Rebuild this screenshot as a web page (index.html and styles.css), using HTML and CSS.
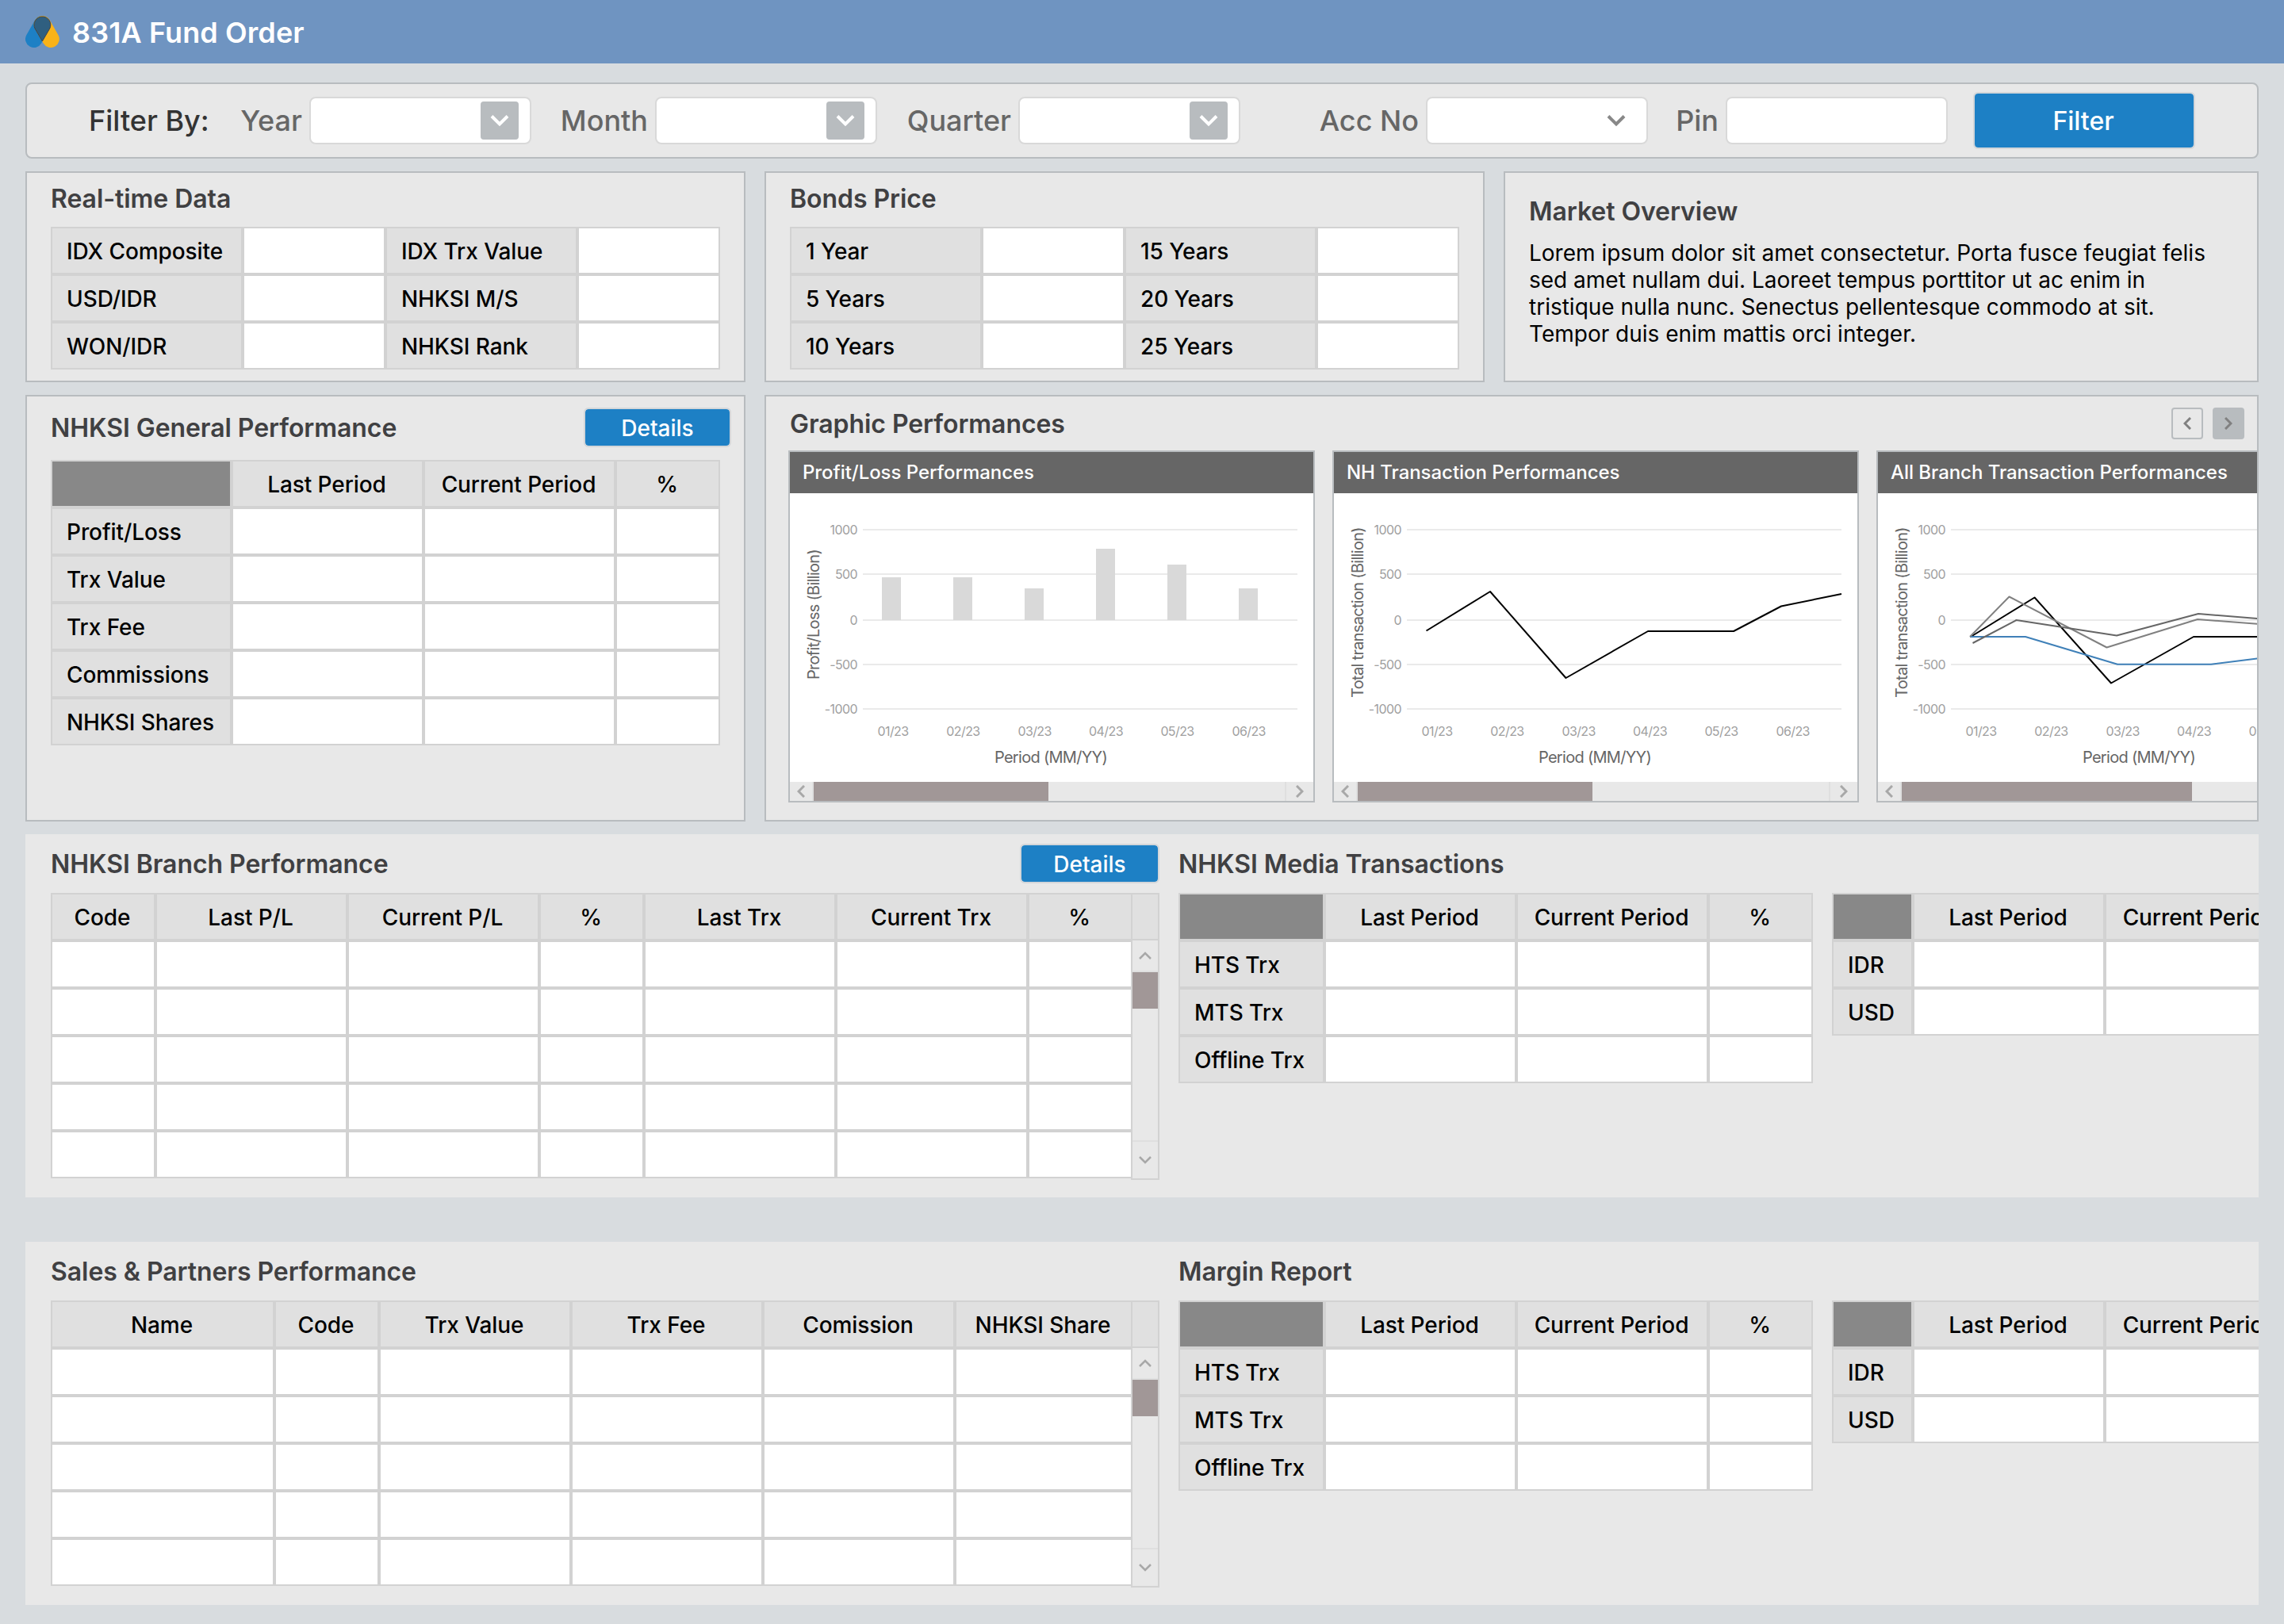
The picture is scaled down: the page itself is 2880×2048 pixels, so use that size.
FILE: index.html
```html
<!DOCTYPE html>
<html lang="en">
<head>
  <meta charset="UTF-8" />
  <meta name="viewport" content="width=device-width, initial-scale=1.0"/>
  <title>831A Fund Order</title>
  <link rel="stylesheet" href="styles.css">
</head>
<body>
  <header class="topbar">
    <svg class="logo" viewBox="0 0 43 40">
      <path d="M10.7 29.3L21.4 10.7" stroke="#1d80c5" stroke-width="21.4" stroke-linecap="round"/>
      <path d="M32.1 29.3L21.4 10.7" stroke="#fab319" stroke-width="21.4" stroke-linecap="round"/>
      <path d="M21.4 32L12.1 16A10.4 10.4 0 1 1 30.7 16Z" fill="#2f5f80" stroke="#404448" stroke-width="1"/>
    </svg>
    <h1>831A Fund Order</h1>
  </header>

  <main>
    <form class="filter-bar">
      <span class="filter-title">Filter By:</span>
      <label>Year <span class="field"><span class="drop"><svg class="chev" viewBox="0 0 24 16"><path d="M2 2.5L12 12.5L22 2.5"/></svg></span></span></label>
      <label>Month <span class="field"><span class="drop"><svg class="chev" viewBox="0 0 24 16"><path d="M2 2.5L12 12.5L22 2.5"/></svg></span></span></label>
      <label>Quarter <span class="field"><span class="drop"><svg class="chev" viewBox="0 0 24 16"><path d="M2 2.5L12 12.5L22 2.5"/></svg></span></span></label>
      <label>Acc No <span class="field"><span class="drop plain"><svg class="chev" viewBox="0 0 24 16"><path d="M2 2.5L12 12.5L22 2.5"/></svg></span></span></label>
      <label>Pin <span class="field"></span></label>
      <button type="button" class="btn filter-btn">Filter</button>
    </form>

    <div class="row top-row">
      <section class="panel">
        <h2>Real-time Data</h2>
        <table>
          <colgroup><col class="w242"><col class="w180"><col class="w242"><col class="w180"></colgroup>
          <tr><th>IDX Composite</th><td></td><th>IDX Trx Value</th><td></td></tr>
          <tr><th>USD/IDR</th><td></td><th>NHKSI M/S</th><td></td></tr>
          <tr><th>WON/IDR</th><td></td><th>NHKSI Rank</th><td></td></tr>
        </table>
      </section>
      <section class="panel">
        <h2>Bonds Price</h2>
        <table>
          <colgroup><col class="w242"><col class="w180"><col class="w242"><col class="w180"></colgroup>
          <tr><th>1 Year</th><td></td><th>15 Years</th><td></td></tr>
          <tr><th>5 Years</th><td></td><th>20 Years</th><td></td></tr>
          <tr><th>10 Years</th><td></td><th>25 Years</th><td></td></tr>
        </table>
      </section>
      <section class="panel market">
        <h2>Market Overview</h2>
        <p>Lorem ipsum dolor sit amet consectetur. Porta fusce feugiat felis sed amet nullam dui. Laoreet tempus porttitor ut ac enim in tristique nulla nunc. Senectus pellentesque commodo at sit. Tempor duis enim mattis orci integer.</p>
      </section>
    </div>

    <div class="row mid-row">
      <section class="panel general">
        <div class="panel-head">
          <h2>NHKSI General Performance</h2>
          <button type="button" class="btn">Details</button>
        </div>
        <table>
          <colgroup><col class="w228"><col class="w242"><col class="w242"><col class="w132"></colgroup>
          <thead><tr><th class="corner"></th><th>Last Period</th><th>Current Period</th><th>%</th></tr></thead>
          <tbody>
            <tr><th>Profit/Loss</th><td></td><td></td><td></td></tr>
            <tr><th>Trx Value</th><td></td><td></td><td></td></tr>
            <tr><th>Trx Fee</th><td></td><td></td><td></td></tr>
            <tr><th>Commissions</th><td></td><td></td><td></td></tr>
            <tr><th>NHKSI Shares</th><td></td><td></td><td></td></tr>
          </tbody>
        </table>
      </section>

      <section class="panel graphics">
        <div class="panel-head">
          <h2>Graphic Performances</h2>
          <div class="pager">
            <span class="page-btn"><svg viewBox="0 0 10 16"><path d="M9 1L2 8L9 15"/></svg></span>
            <span class="page-btn active"><svg viewBox="0 0 10 16"><path d="M1 1L8 8L1 15"/></svg></span>
          </div>
        </div>
        <div class="cards">
          <article class="card">
            <h3>Profit/Loss Performances</h3>
            <svg class="chart" viewBox="0 0 660 364">
              <path class="grid" d="M92 46H640M92 102H640M92 160H640M92 216H640M92 272H640"/>
              <g class="ticks end">
                <text x="85" y="52">1000</text><text x="85" y="108">500</text><text x="85" y="166">0</text><text x="85" y="222">-500</text><text x="85" y="278">-1000</text>
              </g>
              <g class="ticks">
                <text x="130" y="306">01/23</text><text x="218.5" y="306">02/23</text><text x="308.6" y="306">03/23</text><text x="398.5" y="306">04/23</text><text x="488.5" y="306">05/23</text><text x="578.7" y="306">06/23</text>
              </g>
              <g fill="#d9d9d9">
                <rect x="116" y="106" width="24" height="54"/>
                <rect x="206" y="106" width="24" height="54"/>
                <rect x="296" y="120" width="24" height="40"/>
                <rect x="386" y="70" width="24" height="90"/>
                <rect x="476" y="90" width="24" height="70"/>
                <rect x="566" y="120" width="24" height="40"/>
              </g>
              <text class="axis" transform="translate(36.5 153) rotate(-90)">Profit/Loss (Billion)</text>
              <text class="axis" x="329" y="340">Period (MM/YY)</text>
            </svg>
            <div class="hscroll">
              <span class="arrow"><svg viewBox="0 0 10 16"><path d="M9 1L2 8L9 15"/></svg></span>
              <span class="thumb"></span>
              <span class="arrow last"><svg viewBox="0 0 10 16"><path d="M1 1L8 8L1 15"/></svg></span>
            </div>
          </article>

          <article class="card">
            <h3>NH Transaction Performances</h3>
            <svg class="chart" viewBox="0 0 660 364">
              <path class="grid" d="M92 46H640M92 102H640M92 160H640M92 216H640M92 272H640"/>
              <g class="ticks end">
                <text x="85" y="52">1000</text><text x="85" y="108">500</text><text x="85" y="166">0</text><text x="85" y="222">-500</text><text x="85" y="278">-1000</text>
              </g>
              <g class="ticks">
                <text x="130" y="306">01/23</text><text x="218.5" y="306">02/23</text><text x="308.6" y="306">03/23</text><text x="398.5" y="306">04/23</text><text x="488.5" y="306">05/23</text><text x="578.7" y="306">06/23</text>
              </g>
              <path class="line" stroke="#000" d="M116.5 173.5L197 124L292.5 233L396 174H504L564 142.5L640 127"/>
              <text class="axis" transform="translate(36.5 150.5) rotate(-90)">Total transaction (Billion)</text>
              <text class="axis" x="329" y="340">Period (MM/YY)</text>
            </svg>
            <div class="hscroll">
              <span class="arrow"><svg viewBox="0 0 10 16"><path d="M9 1L2 8L9 15"/></svg></span>
              <span class="thumb"></span>
              <span class="arrow last"><svg viewBox="0 0 10 16"><path d="M1 1L8 8L1 15"/></svg></span>
            </div>
          </article>

          <article class="card">
            <h3>All Branch Transaction Performances</h3>
            <svg class="chart" viewBox="0 0 660 364">
              <path class="grid" d="M92 46H640M92 102H640M92 160H640M92 216H640M92 272H640"/>
              <g class="ticks end">
                <text x="85" y="52">1000</text><text x="85" y="108">500</text><text x="85" y="166">0</text><text x="85" y="222">-500</text><text x="85" y="278">-1000</text>
              </g>
              <g class="ticks">
                <text x="130" y="306">01/23</text><text x="218.5" y="306">02/23</text><text x="308.6" y="306">03/23</text><text x="398.5" y="306">04/23</text><text x="488.5" y="306">05/23</text><text x="578.7" y="306">06/23</text>
              </g>
              <path class="line" stroke="#000" d="M117 181L197.5 131.5L294 239.5L398 181H504L564 150"/>
              <path class="line" stroke="#3f80b8" d="M116 181H186L302 215.8H420L478 208.4L560 198"/>
              <path class="line" stroke="#808080" d="M116 181L165.5 130.5L288.5 194.5L403 159L478 164.7L560 171"/>
              <path class="line" stroke="#666" d="M119.5 189L174.5 160L301 179.5L404 152L478 158L560 164"/>
              <text class="axis" transform="translate(36.5 150.5) rotate(-90)">Total transaction (Billion)</text>
              <text class="axis" x="329" y="340">Period (MM/YY)</text>
            </svg>
            <div class="hscroll">
              <span class="arrow"><svg viewBox="0 0 10 16"><path d="M9 1L2 8L9 15"/></svg></span>
              <span class="thumb wide"></span>
              <span class="arrow last"><svg viewBox="0 0 10 16"><path d="M1 1L8 8L1 15"/></svg></span>
            </div>
          </article>
        </div>
      </section>
    </div>

    <section class="sheet">
      <div class="block main-block">
        <div class="panel-head">
          <h2>NHKSI Branch Performance</h2>
          <button type="button" class="btn">Details</button>
        </div>
        <div class="scroll-table">
          <table>
            <colgroup><col class="w132"><col class="w242"><col class="w242"><col class="w132"><col class="w242"><col class="w242"><col class="w132"></colgroup>
            <thead><tr><th>Code</th><th>Last P/L</th><th>Current P/L</th><th>%</th><th>Last Trx</th><th>Current Trx</th><th>%</th></tr></thead>
            <tbody>
              <tr><td></td><td></td><td></td><td></td><td></td><td></td><td></td></tr>
              <tr><td></td><td></td><td></td><td></td><td></td><td></td><td></td></tr>
              <tr><td></td><td></td><td></td><td></td><td></td><td></td><td></td></tr>
              <tr><td></td><td></td><td></td><td></td><td></td><td></td><td></td></tr>
              <tr><td></td><td></td><td></td><td></td><td></td><td></td><td></td></tr>
            </tbody>
          </table>
          <div class="vscroll">
            <div class="vhead"></div>
            <span class="varrow"><svg viewBox="0 0 16 10"><path d="M1 9L8 2L15 9"/></svg></span>
            <span class="vthumb"></span>
            <span class="varrow down"><svg viewBox="0 0 16 10"><path d="M1 1L8 8L15 1"/></svg></span>
          </div>
        </div>
      </div>
      <div class="block">
        <div class="panel-head"><h2>NHKSI Media Transactions</h2></div>
        <div class="pair">
          <table>
            <colgroup><col class="w184"><col class="w242"><col class="w242"><col class="w132"></colgroup>
            <thead><tr><th class="corner"></th><th>Last Period</th><th>Current Period</th><th>%</th></tr></thead>
            <tbody>
              <tr><th>HTS Trx</th><td></td><td></td><td></td></tr>
              <tr><th>MTS Trx</th><td></td><td></td><td></td></tr>
              <tr><th>Offline Trx</th><td></td><td></td><td></td></tr>
            </tbody>
          </table>
          <table>
            <colgroup><col class="w102"><col class="w242"><col class="w242"></colgroup>
            <thead><tr><th class="corner"></th><th>Last Period</th><th>Current Period</th></tr></thead>
            <tbody>
              <tr><th>IDR</th><td></td><td></td></tr>
              <tr><th>USD</th><td></td><td></td></tr>
            </tbody>
          </table>
        </div>
      </div>
    </section>

    <section class="sheet">
      <div class="block main-block">
        <div class="panel-head">
          <h2>Sales &amp; Partners Performance</h2>
        </div>
        <div class="scroll-table">
          <table>
            <colgroup><col class="w282"><col class="w132"><col class="w242"><col class="w242"><col class="w242"><col class="w224"></colgroup>
            <thead><tr><th>Name</th><th>Code</th><th>Trx Value</th><th>Trx Fee</th><th>Comission</th><th>NHKSI Share</th></tr></thead>
            <tbody>
              <tr><td></td><td></td><td></td><td></td><td></td><td></td></tr>
              <tr><td></td><td></td><td></td><td></td><td></td><td></td></tr>
              <tr><td></td><td></td><td></td><td></td><td></td><td></td></tr>
              <tr><td></td><td></td><td></td><td></td><td></td><td></td></tr>
              <tr><td></td><td></td><td></td><td></td><td></td><td></td></tr>
            </tbody>
          </table>
          <div class="vscroll">
            <div class="vhead"></div>
            <span class="varrow"><svg viewBox="0 0 16 10"><path d="M1 9L8 2L15 9"/></svg></span>
            <span class="vthumb"></span>
            <span class="varrow down"><svg viewBox="0 0 16 10"><path d="M1 1L8 8L15 1"/></svg></span>
          </div>
        </div>
      </div>
      <div class="block">
        <div class="panel-head"><h2>Margin Report</h2></div>
        <div class="pair">
          <table>
            <colgroup><col class="w184"><col class="w242"><col class="w242"><col class="w132"></colgroup>
            <thead><tr><th class="corner"></th><th>Last Period</th><th>Current Period</th><th>%</th></tr></thead>
            <tbody>
              <tr><th>HTS Trx</th><td></td><td></td><td></td></tr>
              <tr><th>MTS Trx</th><td></td><td></td><td></td></tr>
              <tr><th>Offline Trx</th><td></td><td></td><td></td></tr>
            </tbody>
          </table>
          <table>
            <colgroup><col class="w102"><col class="w242"><col class="w242"></colgroup>
            <thead><tr><th class="corner"></th><th>Last Period</th><th>Current Period</th></tr></thead>
            <tbody>
              <tr><th>IDR</th><td></td><td></td></tr>
              <tr><th>USD</th><td></td><td></td></tr>
            </tbody>
          </table>
        </div>
      </div>
    </section>
  </main>
</body>
</html>
```
FILE: styles.css
```css
* {
  box-sizing: border-box;
}

body {
  margin: 0;
  font-family: Inter, "Liberation Sans", sans-serif;
  font-size: 28px;
  color: #000;
  background: #d8dcdf;
}

h1, h2, h3, p {
  margin: 0;
}

svg {
  display: block;
  fill: none;
}

.topbar {
  display: flex;
  align-items: center;
  gap: 16px;
  height: 80px;
  padding-left: 32px;
  background: #6f94c1;
}

.logo {
  width: 43px;
  height: 40px;
}

h1 {
  padding-top: 2px;
  font-size: 36px;
  font-weight: 600;
  line-height: 44px;
  letter-spacing: 0.1px;
  color: #fff;
}

h2 {
  padding-top: 2px;
  font-size: 32px;
  font-weight: 600;
  line-height: 38px;
  letter-spacing: -0.06px;
  color: #404042;
}

main {
  padding: 24px 32px;
}

/* filter bar */
.filter-bar {
  display: grid;
  grid-template-columns: 238px 398px 436px 458px 514px 378px 312px;
  align-items: center;
  height: 96px;
  border: 2px solid #b8bcbf;
  border-radius: 8px;
  background: #e8e8e8;
  font-size: 36px;
  font-weight: 500;
}

.filter-title {
  padding-left: 78px;
  color: #333;
}

.filter-bar label {
  display: flex;
  justify-content: flex-end;
  align-items: center;
  gap: 9px;
  color: #666;
}

.field {
  display: flex;
  justify-content: flex-end;
  align-items: center;
  width: 280px;
  height: 60px;
  padding-right: 14px;
  border: 2px solid #d9d9d9;
  border-radius: 8px;
  background: #fff;
}

.drop {
  display: flex;
  align-items: center;
  justify-content: center;
  width: 48px;
  height: 48px;
  border-radius: 4px;
  background: #b8bcbf;
  stroke: #fff;
  stroke-width: 4;
}

.drop.plain {
  background: none;
  stroke: #888;
}

.chev {
  width: 24px;
  height: 16px;
}

.btn {
  width: 186px;
  height: 50px;
  padding: 2px 0 0;
  border: 2px solid #d3d6d9;
  border-radius: 6px;
  background: #1d80c5;
  background-clip: padding-box;
  color: #fff;
  font: 500 28px Inter, "Liberation Sans", sans-serif;
}

.filter-btn {
  justify-self: end;
  width: 280px;
  height: 72px;
  padding: 0 2px 0 0;
  font-size: 32px;
}

/* panels */
.row {
  display: grid;
  gap: 24px;
  margin-top: 16px;
}

.top-row {
  grid-template-columns: 908px 908px 952px;
  height: 266px;
}

.mid-row {
  grid-template-columns: 908px 1884px;
  height: 538px;
}

.panel {
  padding: 12px 30px;
  border: 2px solid #b8bcbf;
  background: #e8e8e8;
}

.panel > h2 {
  margin-bottom: 16px;
}

.market {
  padding-top: 28px;
}

.market p {
  line-height: 34px;
}

.panel-head {
  display: flex;
  justify-content: space-between;
  align-items: center;
}

.general {
  padding-top: 14px;
}

.general .panel-head {
  margin: 0 -14px 16px 0;
}

/* tables */
table {
  width: 0;
  flex: none;
  align-self: flex-start;
  table-layout: fixed;
  border-collapse: separate;
  border-spacing: 0;
}

th, td {
  height: 60px;
  padding: 0;
  border: 2px solid #d2d2d2;
  background: #fff;
}

th {
  padding: 2px 0 0 18px;
  background: #e0e0e0;
  font-weight: 500;
  line-height: 34px;
  letter-spacing: -0.08px;
  text-align: left;
  white-space: nowrap;
}

thead th {
  padding: 2px 2px 0 0;
  text-align: center;
}

.corner {
  background: #888;
}

.w102 { width: 102px; }
.w132 { width: 132px; }
.w180 { width: 180px; }
.w184 { width: 184px; }
.w224 { width: 224px; }
.w228 { width: 228px; }
.w242 { width: 242px; }
.w282 { width: 282px; }

/* chart cards */
.graphics {
  padding: 14px 0 0 28px;
  overflow: hidden;
}

.graphics .panel-head {
  height: 40px;
  padding-left: 2px;
  padding-right: 16px;
}

.pager {
  display: flex;
  gap: 12px;
}

.page-btn {
  display: flex;
  align-items: center;
  justify-content: center;
  width: 40px;
  height: 40px;
  border: 2px solid #b8bcbf;
  border-radius: 4px;
  stroke: #808080;
  stroke-width: 3;
}

.page-btn.active {
  background: #b8bcbf;
}

.page-btn svg, .arrow svg {
  width: 10px;
  height: 16px;
}

.cards {
  display: flex;
  gap: 22px;
  margin-top: 14px;
}

.card {
  flex: none;
  width: 664px;
  height: 444px;
  border: 2px solid #b8bcbf;
  background: #fff;
}

.card h3 {
  height: 52px;
  padding-left: 16px;
  background: #666;
  color: #fff;
  font-size: 24px;
  font-weight: 500;
  line-height: 51px;
  letter-spacing: -0.05px;
}

.chart {
  width: 660px;
  height: 364px;
}

.grid {
  stroke: #e4e4e4;
  stroke-width: 1.5;
}

.ticks {
  fill: #a0a0a0;
  font-size: 16px;
  letter-spacing: -0.6px;
  text-anchor: middle;
}

.ticks.end {
  text-anchor: end;
}

.axis {
  fill: #666;
  font-size: 20px;
  letter-spacing: -0.7px;
  text-anchor: middle;
}

.line {
  stroke-width: 2;
  stroke-linejoin: round;
}

.hscroll {
  display: flex;
  height: 24px;
  background: #e8e8e8;
}

.arrow {
  display: flex;
  align-items: center;
  justify-content: center;
  width: 30px;
  border-right: 2px solid #dfdfdf;
  stroke: #a8a8a8;
  stroke-width: 3;
}

.arrow.last {
  width: 36px;
  margin-left: auto;
  border-right: none;
  border-left: 2px solid #dfdfdf;
}

.thumb {
  width: 296px;
  background: #a19797;
}

.thumb.wide {
  width: 366px;
}

/* lower sheets */
.sheet {
  display: flex;
  gap: 24px;
  height: 458px;
  margin-top: 16px;
  padding: 12px 0 0 32px;
  background: #e8e8e8;
  overflow: hidden;
}

.sheet + .sheet {
  margin-top: 56px;
}

.sheet .panel-head {
  height: 50px;
  margin-bottom: 12px;
}

.sheet .btn {
  width: 176px;
}

.block {
  flex: none;
}

.main-block {
  width: 1398px;
}

.scroll-table {
  display: flex;
}

.pair {
  display: flex;
  gap: 24px;
}

/* the scrollbar shares its left border with the last table column */
.vscroll {
  position: relative;
  display: flex;
  flex-direction: column;
  width: 36px;
  height: 362px;
  margin-left: -2px;
  border: 2px solid #d2d2d2;
  background: #e8e8e8;
}

.vhead {
  flex: none;
  height: 58px;
  background: #e0e0e0;
  border-bottom: 2px solid #d2d2d2;
}

.varrow {
  display: flex;
  align-items: center;
  justify-content: center;
  height: 40px;
  border-bottom: 2px solid #dfdfdf;
  stroke: #a8a8a8;
  stroke-width: 2.5;
}

.varrow.down {
  height: 48px;
  margin-top: auto;
  border-bottom: none;
  border-top: 2px solid #dfdfdf;
}

.varrow svg {
  width: 16px;
  height: 10px;
}

.vthumb {
  height: 46px;
  background: #a19797;
}
```
